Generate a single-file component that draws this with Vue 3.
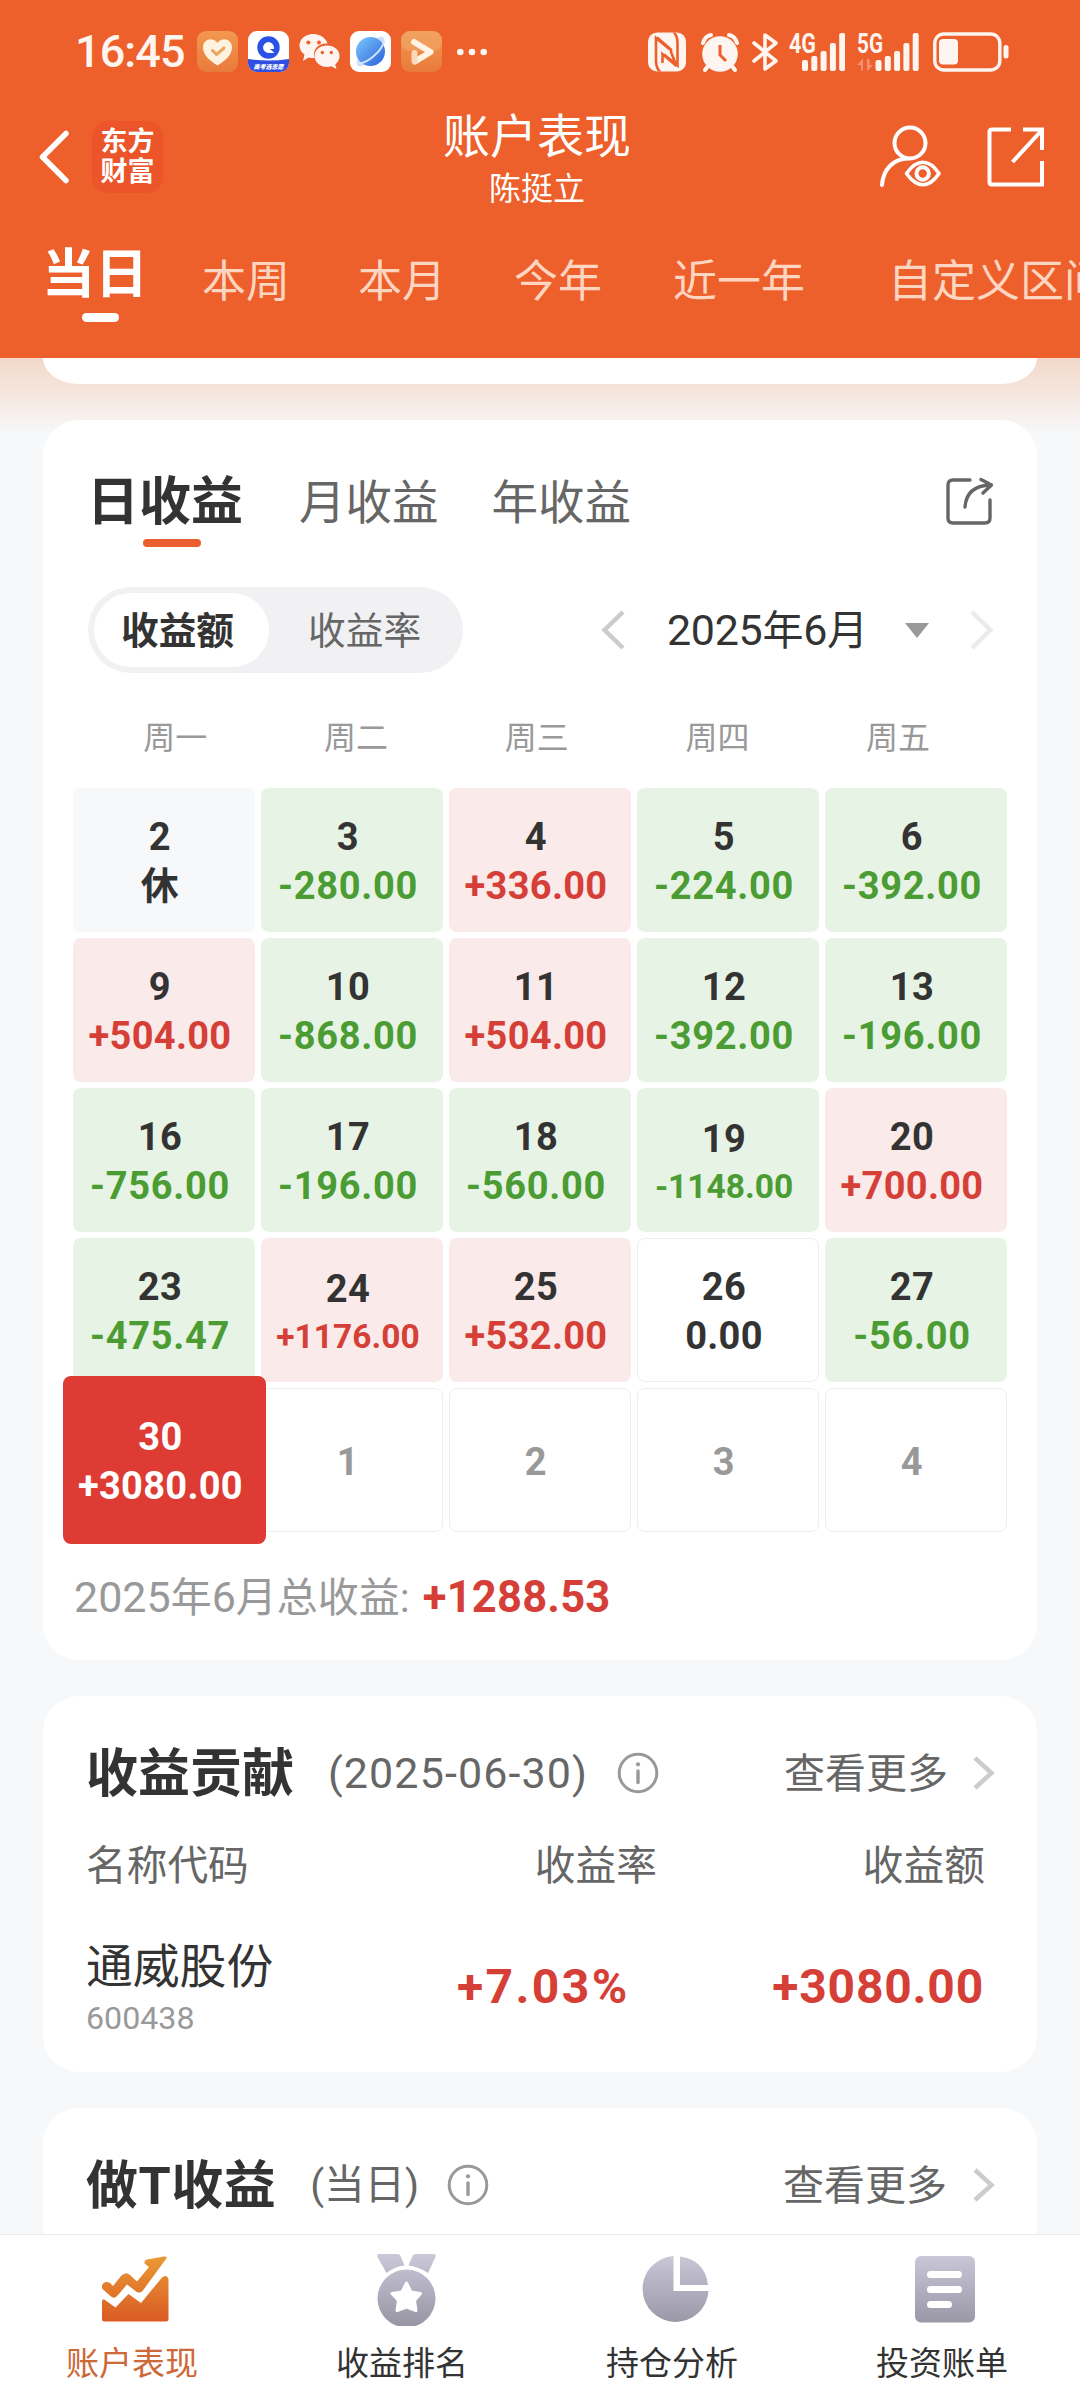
<script setup>
const periods = [
  { label: '本周', x: 54 },
  { label: '本月', x: 68 },
  { label: '今年', x: 68 },
  { label: '近一年', x: 71 },
  { label: '自定义区间', x: 83 },
]

const weekdays = ['周一', '周二', '周三', '周四', '周五']

const rows = [
  [[2, '休', 'rest'], [3, '-280.00'], [4, '+336.00'], [5, '-224.00'], [6, '-392.00']],
  [[9, '+504.00'], [10, '-868.00'], [11, '+504.00'], [12, '-392.00'], [13, '-196.00']],
  [[16, '-756.00'], [17, '-196.00'], [18, '-560.00'], [19, '-1148.00'], [20, '+700.00']],
  [[23, '-475.47'], [24, '+1176.00'], [25, '+532.00'], [26, '0.00', 'flat'], [27, '-56.00']],
  [[30, '+3080.00', 'selected'], [1, '', 'next'], [2, '', 'next'], [3, '', 'next'], [4, '', 'next']],
]

const days = rows.flat().map(([day, amount, state]) => ({
  day,
  amount,
  state: state || (amount[0] === '+' ? 'up' : 'down'),
  small: !state && amount.length > 7,
}))

const bars = [0, 1, 2, 3, 4]
</script>

<template>
  <div class="screen">
    <header class="top">
      <div class="status">
        <span class="clock">16:45</span>
        <svg class="tile" viewBox="0 0 41 41">
          <defs>
            <linearGradient id="amber" x1="0" y1="0" x2="0" y2="1">
              <stop offset="0" stop-color="#f2994e" /><stop offset="1" stop-color="#e97a3c" />
            </linearGradient>
          </defs>
          <rect width="41" height="41" rx="9" fill="url(#amber)" />
          <path d="M20.500 34.500C13 30 6 24 6 16.500C6 8 16 5.500 20.500 12C25 5.500 35 8 35 16.500C35 24 28 30 20.500 34.500Z" fill="#fff3e0" />
          <path d="M15.500 19.500l4 4 7.500-6.500" fill="none" stroke="#e9a860" stroke-width="3" stroke-linecap="round" stroke-linejoin="round" />
        </svg>
        <svg class="tile" viewBox="0 0 41 41">
          <defs><clipPath id="tileClip"><rect width="41" height="41" rx="9" /></clipPath></defs>
          <g clip-path="url(#tileClip)">
            <rect width="41" height="41" fill="#fff" />
            <path d="M0 28Q20 31 41 28V41H0Z" fill="#2f4fe0" />
            <circle cx="20.500" cy="16.500" r="8.300" fill="none" stroke="#2a52e6" stroke-width="5.800" />
            <path d="M21.500 22h4.500v-4.500h-4.500z" fill="#fff" />
            <path d="M22 18h4.500v4z" fill="#2a52e6" />
          </g>
          <text x="20.500" y="38" text-anchor="middle" font-size="6" font-weight="900" font-style="italic" fill="#fff">高考选志愿</text>
        </svg>
        <svg class="tile" viewBox="0 0 41 41">
          <path d="M14 3C6.500 3 .500 8 .500 14.500c0 4 2 7 5 9L4 30l5.500-3.500c2 .6 4 .7 6 .5C13 18 20 12 28.500 12.500C27 7 21 3 14 3Z" fill="#fff5f0" />
          <path d="M28 14.500c-7 0-12.500 4.500-12.500 10.500S21 36 28 36c1.500 0 3-.2 4.500-.7L37.500 38l-1.300-4.500c2.600-2 4.300-5 4.300-8.500C40.500 19 35 14.500 28 14.500Z" fill="#fff5f0" />
          <g fill="#ed5f2b"><circle cx="9.300" cy="11.500" r="2" /><circle cx="20" cy="11.500" r="2" /><circle cx="23.300" cy="21.500" r="1.700" /><circle cx="32.300" cy="21.500" r="1.700" /></g>
        </svg>
        <svg class="tile" viewBox="0 0 41 41">
          <defs>
            <linearGradient id="planet" x1="0" y1="0" x2="1" y2="1">
              <stop offset="0" stop-color="#7cc8ff" /><stop offset="1" stop-color="#2a60d8" />
            </linearGradient>
          </defs>
          <rect width="41" height="41" rx="9" fill="#fff" />
          <ellipse cx="20.500" cy="20.500" rx="19" ry="6.500" transform="rotate(-47 20.500 20.500)" fill="#cfdcfa" />
          <circle cx="20.500" cy="20.500" r="14.500" fill="url(#planet)" />
          <path d="M7.500 32.500C17 33 31 21 34.500 10" fill="none" stroke="#d4e6ff" stroke-width="2" />
        </svg>
        <svg class="tile" viewBox="0 0 41 41">
          <rect width="41" height="41" rx="9" fill="url(#amber)" />
          <rect width="41" height="20" rx="9" fill="#f2a66b" opacity=".6" />
          <path d="M13 11L29.500 21L14 30.500" fill="none" stroke="#fff3e4" stroke-width="6" stroke-linejoin="round" stroke-linecap="round" />
          <path d="M13.500 22v8" stroke="#fbd9ba" stroke-width="6" stroke-linecap="round" />
        </svg>
        <svg class="dots" width="30" height="8" viewBox="0 0 30 8" fill="#fff5f0"><circle cx="3.300" cy="4" r="3.300" /><circle cx="15" cy="4" r="3.300" /><circle cx="26.700" cy="4" r="3.300" /></svg>

        <svg class="nfc" width="38" height="40" viewBox="0 0 38 40">
          <defs><clipPath id="nfcClip"><rect width="38" height="39" y=".5" rx="9" /></clipPath></defs>
          <g clip-path="url(#nfcClip)">
            <rect width="38" height="40" fill="#fff5f0" />
            <path d="M13 41C8.500 37 8 33 8 29V6L22 17.500M25 -1C29 3 29.500 7 29.500 11V33.500L16 22.500" fill="none" stroke="#ed5f2b" stroke-width="2.600" />
            <path d="M9 5.500L23 17.500V20L28.500 34L14.500 22V31" fill="none" stroke="#ed5f2b" stroke-width="2.600" />
          </g>
        </svg>
        <svg class="alarm" width="38" height="40" viewBox="0 0 38 40">
          <circle cx="19" cy="22" r="17.800" fill="#fff5f0" />
          <path d="M2 11Q4 4 10 3M36 11Q34 4 28 3M7 34l-3 4M31 34l3 4" stroke="#fff5f0" stroke-width="4" fill="none" stroke-linecap="round" />
          <path d="M19 13v10l6 6" stroke="#ed5f2b" stroke-width="3" fill="none" />
        </svg>
        <svg class="bt" width="26" height="40" viewBox="0 0 26 40">
          <path d="M2 11l22 18-11 8V3l11 8L2 29" fill="none" stroke="#fff5f0" stroke-width="3.600" stroke-linejoin="round" stroke-linecap="round" />
        </svg>
        <svg class="sig" width="56" height="60" viewBox="0 -10 56 60" fill="#fff5f0">
          <text x="0" y="20.500" font-size="27" font-weight="700" textLength="27" lengthAdjust="spacingAndGlyphs">4G</text>
          <rect v-for="i in bars" :key="i" :x="13 + i * 9.3" :y="[28, 24, 19, 11, 1][i]" width="6" :height="[11, 15, 20, 28, 38][i]" rx="2" />
        </svg>
        <svg class="sig2" width="62" height="60" viewBox="0 -10 62 60" fill="#fff5f0">
          <text x="0" y="20.500" font-size="27" font-weight="700" textLength="26" lengthAdjust="spacingAndGlyphs">5G</text>
          <path d="M0 33l6-6.500V38.500H4V33ZM16 33l-6 6V27h2.500v6Z" fill="#f79072" />
          <rect v-for="i in bars" :key="i" :x="18.500 + i * 9.3" :y="[28, 24, 19, 11, 1][i]" width="6" :height="[11, 15, 20, 28, 38][i]" rx="2" />
        </svg>
        <svg class="battery" width="76" height="40" viewBox="0 0 76 40">
          <rect x="1.800" y="2" width="65" height="36" rx="9" fill="none" stroke="#fff5f0" stroke-width="3.400" />
          <rect x="6" y="7" width="19" height="25.500" rx="4" fill="#fff5f0" />
          <rect x="70.500" y="13" width="5" height="13.500" rx="2.500" fill="#fff5f0" />
        </svg>
      </div>

      <div class="bar">
        <div class="bar-left">
          <svg width="32" height="56" viewBox="0 0 32 56"><path d="M28 4.500L4.500 28L28 51.500" fill="none" stroke="#fff" stroke-width="5.500" stroke-linecap="round" stroke-linejoin="round" /></svg>
          <div class="brand"><span>东方</span><span>财富</span></div>
        </div>
        <div class="titles">
          <div class="title">账户表现</div>
          <div class="owner">陈挺立</div>
        </div>
        <div class="bar-right">
          <svg width="62" height="63" viewBox="0 0 62 63" fill="none" stroke="#fff" stroke-width="4" stroke-linecap="round">
            <circle cx="31" cy="18" r="15.500" />
            <path d="M3 60C4 44 15 33.500 29 33.500" />
            <path d="M27.500 48.500C38 33.500 50 33.500 60 48.500C50 63.500 38 63.500 27.500 48.500Z" stroke-width="3.600" stroke-linejoin="round" />
            <circle cx="43.700" cy="48.500" r="6.200" stroke-width="4" />
          </svg>
          <svg class="open" width="58" height="60" viewBox="0 0 58 60" fill="none" stroke="#fff" stroke-width="4">
            <path d="M24 2.500H5Q2.500 2.500 2.500 5V55Q2.500 57.500 5 57.500H55V34" /><path d="M36 2.500H55V23M55 3L25.500 35" />
          </svg>
        </div>
      </div>

      <nav class="periods">
        <div class="period on">当日<i></i></div>
        <div v-for="p in periods" :key="p.label" class="period" :style="{ marginLeft: p.x + 'px' }">{{ p.label }}</div>
      </nav>
    </header>

    <main class="body">
      <div class="tail"></div>

      <section class="card calendar">
        <div class="kinds">
          <div class="kind on">日收益<i></i></div>
          <div class="kind k2">月收益</div>
          <div class="kind k3">年收益</div>
          <svg class="share" width="48" height="50" viewBox="0 0 48 50" fill="none" stroke="#666" stroke-width="3.400" stroke-linecap="round" stroke-linejoin="round">
            <path d="M25 4H8Q3 4 3 9V42Q3 47 8 47H40Q45 47 45 42V24" />
            <path d="M20 31C21 17 29 9.500 45.500 9M36 3.500L46.500 9L38 17" />
          </svg>
        </div>

        <div class="controls">
          <div class="toggle"><span class="pill">收益额</span><span class="other">收益率</span></div>
          <div class="month">
            <svg width="24" height="40" viewBox="0 0 24 40"><path d="M22 2L3.500 20L22 38" fill="none" stroke="#ccc" stroke-width="4.500" /></svg>
            <span class="month-text"><b>2025</b>年<b>6</b>月</span>
            <svg class="caret" width="24" height="15" viewBox="0 0 24 15"><path d="M0 0H24L12 15Z" fill="#999" /></svg>
            <svg width="24" height="40" viewBox="0 0 24 40"><path d="M2 2L20.500 20L2 38" fill="none" stroke="#ebebeb" stroke-width="4.500" /></svg>
          </div>
        </div>

        <div class="week"><span v-for="w in weekdays" :key="w">{{ w }}</span></div>

        <div class="grid">
          <div v-for="(d, i) in days" :key="i" class="cell" :class="[d.state, { small: d.small }]">
            <span class="day">{{ d.day }}</span>
            <span v-if="d.amount" class="amount">{{ d.amount }}</span>
          </div>
        </div>

        <div class="total"><b>2025</b>年<b>6</b>月总收益:<strong>+1288.53</strong></div>
      </section>

      <section class="card contrib">
        <div class="head">
          <h2>收益贡献</h2>
          <span class="date">(2025-06-30)</span>
          <svg class="info" width="42" height="42" viewBox="0 0 42 42"><circle cx="21" cy="21" r="18.800" fill="none" stroke="#999" stroke-width="3" /><circle cx="21" cy="12.300" r="2.100" fill="#999" /><path d="M21 19V30.500" stroke="#999" stroke-width="3.400" stroke-linecap="round" /></svg>
          <span class="more">查看更多</span>
          <svg width="22" height="34" viewBox="0 0 22 34"><path d="M2 2L18.500 17L2 32" fill="none" stroke="#ccc" stroke-width="4.500" /></svg>
        </div>
        <div class="cols"><span>名称代码</span><span class="c2">收益率</span><span class="c3">收益额</span></div>
        <div class="stock">
          <div class="name"><span>通威股份</span><small>600438</small></div>
          <span class="rate">+7.03%</span>
          <span class="gain">+3080.00</span>
        </div>
      </section>

      <section class="card tgain">
        <div class="head">
          <h2>做T收益</h2>
          <span class="today">(当日)</span>
          <svg class="info" width="42" height="42" viewBox="0 0 42 42"><circle cx="21" cy="21" r="18.800" fill="none" stroke="#999" stroke-width="3" /><circle cx="21" cy="12.300" r="2.100" fill="#999" /><path d="M21 19V30.500" stroke="#999" stroke-width="3.400" stroke-linecap="round" /></svg>
          <span class="more">查看更多</span>
          <svg width="22" height="34" viewBox="0 0 22 34"><path d="M2 2L18.500 17L2 32" fill="none" stroke="#ccc" stroke-width="4.500" /></svg>
        </div>
      </section>
    </main>

    <footer class="nav">
      <div class="item on">
        <svg width="68" height="76" viewBox="0 0 68 76">
          <defs>
            <linearGradient id="fire" gradientUnits="userSpaceOnUse" x1="0" y1="6" x2="0" y2="70"><stop offset="0" stop-color="#ea9a35" /><stop offset="1" stop-color="#da5c25" /></linearGradient>
            <linearGradient id="steel" gradientUnits="userSpaceOnUse" x1="0" y1="4" x2="0" y2="74"><stop offset="0" stop-color="#cac8d9" /><stop offset="1" stop-color="#9997a6" /></linearGradient>
          </defs>
          <g fill="url(#fire)">
            <path d="M1 51Q2 48 4 50L14.500 57.500L27.500 44L40 53L61 27.500Q66 24 67.500 29V69Q67.500 71.500 65 71.500H3.500Q1 71.500 1 69Z" />
            <path d="M1.500 39C-1 34 5 30 9 33L12 36L20 26Q25 21 29 25L36 31.500L48 17L43.500 13.500Q43 10 46 9.500L63 6.500Q67 6 65 9L41.500 41Q38 44 34.500 41L26 34.500L17 45Q13 50 9.500 46Z" />
          </g>
        </svg>
        <span>账户表现</span>
      </div>
      <div class="item">
        <svg width="68" height="76" viewBox="-1.500 0 68 76">
          <g fill="url(#steel)">
            <path d="M6.500 4H25Q27 4 28 6L32 15.500Q22 16.500 14 23L5 7Q4 4 6.500 4ZM61 4H43Q41 4 40 6L36 15.500Q47 17 55.500 23L63 7Q64 4 61 4Z" />
            <circle cx="34" cy="48.500" r="29" />
          </g>
          <path d="M34 33L38.500 42L48 43.500L42 50.500L43.500 60.500L34 57L24.500 60.500L26 50.500L19.500 43.500L29.500 42Z" fill="#fff" stroke="#fff" stroke-width="3" stroke-linejoin="round" />
        </svg>
        <span>收益排名</span>
      </div>
      <div class="item">
        <svg width="68" height="76" viewBox="0 0 68 76">
          <g fill="url(#steel)"><path d="M32.500 6A33 33 0 1 0 67.500 41H32.500Z" /><path d="M39 6.500V35H67Q64 10 39 6.500Z" /></g>
        </svg>
        <span>持仓分析</span>
      </div>
      <div class="item">
        <svg width="68" height="76" viewBox="0 0 68 76">
          <rect x="4" y="6" width="60" height="66.500" rx="6" fill="url(#steel)" />
          <path d="M19.500 24.500H47.500M19.500 39.500H47.500M19.500 54.500H37.500" stroke="#fff" stroke-width="7" stroke-linecap="round" />
        </svg>
        <span>投资账单</span>
      </div>
    </footer>
  </div>
</template>

<style>
body { margin: 0; background: #f7f8fa; }
</style>

<style scoped>
.screen {
  width: 1080px;
  height: 2400px;
  overflow: hidden;
  display: flex;
  flex-direction: column;
  background: #f7f8fa;
  color: #333;
  font-family: Roboto, "Noto Sans CJK SC", sans-serif;
  white-space: nowrap;
}
svg { flex: none; display: block; }
i { display: block; }

.top { height: 358px; flex: none; background: #ed5f2b; color: #fff; overflow: hidden; }
.status { display: flex; align-items: center; height: 103px; padding-left: 75px; box-sizing: border-box; }
.clock { width: 122px; font-size: 45px; font-weight: 500; line-height: 60px; letter-spacing: -.9px; color: #fff5f0; }
.tile { width: 41px; height: 41px; margin-right: 10px; }
.dots { margin-left: 5px; }
.nfc { margin-left: 161px; }
.alarm { margin-left: 15px; }
.bt { margin-left: 13px; }
.sig { margin-left: 11px; }
.sig2 { margin-left: 12px; }
.battery { margin-left: 14px; }

.bar { display: grid; grid-template-columns: 300px 1fr 300px; height: 107px; }
.bar-left { display: flex; align-items: center; padding-left: 38px; gap: 22px; }
.brand { width: 71px; height: 72px; border-radius: 16px; background: #eb5529; display: flex; flex-direction: column; align-items: center; justify-content: center; font-size: 27px; line-height: 30px; font-weight: 700; }
.titles { text-align: center; padding-right: 6px; }
.title { font-size: 47px; line-height: 60px; padding-top: 4px; }
.owner { font-size: 32px; line-height: 42px; margin-top: 1px; }
.bar-right { display: flex; align-items: center; justify-content: flex-end; padding-right: 35px; }
.open { margin-left: 46px; }

.periods { display: flex; height: 148px; padding-left: 42px; align-items: flex-start; }
.period { flex: none; font-size: 44px; line-height: 60px; margin-top: 42px; color: #fdd5c0; }
.period.on { font-size: 53px; font-weight: 700; color: #fff; margin-top: 35px; }
.period.on i { width: 37px; height: 9px; border-radius: 5px; background: #fff; margin: 8px 0 0 40px; }

.body { flex: 1; min-height: 0; overflow: hidden; padding: 0 43px; background: linear-gradient(#f2d8c9 0, #f5e4db 30px, #f7f8fa 76px); }
.tail { height: 26px; background: #fff; border-radius: 0 0 36px 36px / 0 0 26px 26px; margin-bottom: 36px; }
.card { background: #fff; border-radius: 36px; box-sizing: border-box; margin-bottom: 36px; }

.calendar { height: 1240px; padding: 0 30px; }
.kinds { display: flex; align-items: flex-start; padding: 53px 14px 0 14px; height: 167px; box-sizing: border-box; }
.kind { font-size: 46.500px; line-height: 60px; color: #666; }
.kind.on { font-size: 52px; font-weight: 700; color: #333; }
.kind.on i { width: 58px; height: 8px; border-radius: 4px; background: #ea5f2d; margin: 6px 0 0 56px; }
.k2 { margin-left: 56px; }
.k3 { margin-left: 53px; }
.share { margin-left: auto; margin-top: 3px; }

.controls { display: flex; justify-content: space-between; height: 86px; padding: 0 13px 0 15px; }
.toggle { display: flex; width: 375px; height: 86px; box-sizing: border-box; border-radius: 43px; background: #f1f1f4; padding: 6px; font-size: 37.700px; line-height: 76px; }
.pill { width: 175px; height: 74px; border-radius: 37px; background: #fff; text-align: center; font-weight: 700; padding-right: 8px; box-sizing: border-box; }
.other { margin-left: 39px; color: #666; }
.month { display: flex; align-items: center; }
.month-text { font-size: 41px; line-height: 60px; width: 200px; margin-left: 42px; padding-top: 1px; letter-spacing: -.3px; }
.month-text b, .total b { font-weight: 400; font-size: 43px; }
.caret { margin: 0 41px 0 38px; }

.week { display: flex; height: 115px; padding-left: 12px; font-size: 32px; line-height: 130px; color: #999; }
.week span { width: 180.700px; text-align: center; }

.grid { display: grid; grid-template-columns: repeat(5, 182px); grid-auto-rows: 144px; gap: 6px; }
.cell { display: flex; flex-direction: column; align-items: center; justify-content: center; box-sizing: border-box; padding: 4px 8px 0 0; border-radius: 8px; font-size: 38px; font-weight: 700; line-height: 49px; }
.day { letter-spacing: .5px; }
.amount { letter-spacing: .3px; }
.rest { background: #f7f8fa; }
.down { background: #e7f3e5; }
.up { background: #faeae9; }
.down .amount { color: #4a9c33; letter-spacing: .7px; }
.up .amount { color: #d53f37; }
.flat, .next { border: 1px solid #eee; }
.next { color: #999; }
.small .amount { font-size: 33.500px; line-height: 45px; letter-spacing: 0; }
.selected { position: relative; z-index: 1; margin: -12px -11px -12px -10px; padding-right: 8px; background: #dd3b33; color: #fff; }

.total { display: flex; align-items: baseline; font-size: 41px; line-height: 60px; margin: 35px 0 0 1px; color: #999; }
.total strong { margin-left: 13px; font-size: 43.500px; letter-spacing: .2px; color: #d53f37; }

.contrib { height: 376px; padding: 0 42px 0 43px; }
.head { display: flex; align-items: center; height: 60px; padding-top: 47px; }
.head h2 { margin: 3px 0 0; font-size: 52px; line-height: 60px; font-weight: 700; }
.date { margin-left: 34px; width: 259px; font-size: 43px; line-height: 60px; letter-spacing: 1.100px; color: #666; }
.info { margin-left: 30px; }
.more { margin-left: auto; margin-right: 25px; font-size: 41px; line-height: 60px; padding-top: 1px; color: #666; }
.cols { display: flex; margin-top: 33px; font-size: 40.700px; line-height: 60px; color: #666; }
.c2 { margin-left: 286px; }
.c3 { margin-left: 206px; }
.stock { display: flex; align-items: center; margin-top: 41px; }
.name { display: flex; flex-direction: column; width: 371px; font-size: 46.800px; line-height: 60px; }
.name small { font-size: 32.200px; line-height: 43px; color: #999; }
.rate, .gain { font-size: 48px; font-weight: 700; line-height: 60px; margin-top: -3px; color: #d53f37; }
.rate { letter-spacing: 2.400px; }
.gain { margin-left: auto; padding-right: 11px; letter-spacing: .8px; }

.tgain { height: 200px; padding: 0 42px 0 43px; }
.tgain h2 { letter-spacing: .5px; }
.today { margin-left: 34px; font-size: 40.500px; line-height: 60px; color: #666; }
.tgain .info { margin-left: 28px; }
.tgain .more { margin-right: 26px; }

.nav { height: 166px; flex: none; box-sizing: border-box; border-top: 1px solid #eaebed; background: #fff; display: grid; grid-template-columns: repeat(4, 270px); }
.item { display: flex; flex-direction: column; align-items: center; padding-top: 15px; font-size: 33px; line-height: 44px; }
.item span { margin: 16px 6px 0 0; }
.item.on { color: #cd6838; }
</style>
